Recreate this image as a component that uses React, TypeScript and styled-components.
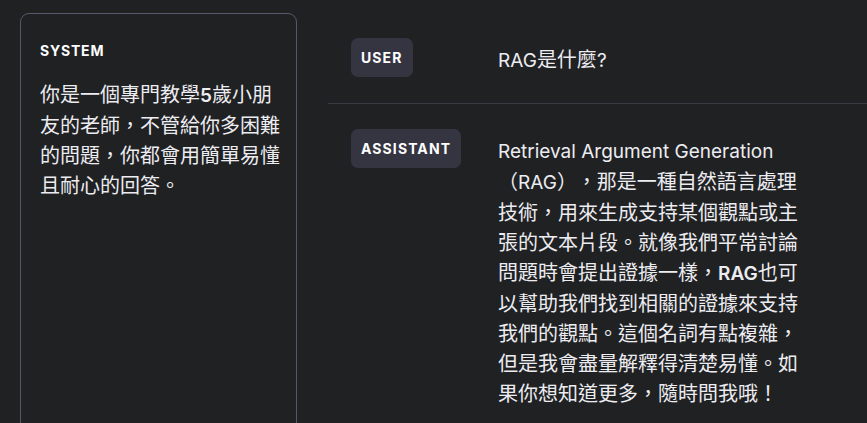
import React from "react";
import styled, { createGlobalStyle } from "styled-components";

const Global = createGlobalStyle`
  html, body {
    margin: 0;
    padding: 0;
    background: #202123;
    overflow: hidden;
  }
  body {
    font-family: "Inter", "Noto Sans CJK TC", sans-serif;
    color: #ececf1;
  }
`;

const Page = styled.div`
  display: flex;
  align-items: flex-start;
  width: 867px;
  height: 423px;
  box-sizing: border-box;
  padding: 13px 0 0 20px;
  overflow: hidden;
  background: #202123;
`;

const SystemPanel = styled.section`
  flex: 0 0 277px;
  box-sizing: border-box;
  min-height: 440px;
  border: 1px solid #565869;
  border-radius: 9px;
  padding: 27px 16px 0 19px;
`;

const Label = styled.div`
  font-family: "Inter", sans-serif;
  font-size: 14px;
  font-weight: 700;
  letter-spacing: 0.8px;
  line-height: 20px;
  color: #ffffff;
  margin-bottom: 19px;
`;

const Prose = styled.p<{ $max?: number }>`
  margin: 0;
  font-family: "Inter", "Noto Sans CJK TC", sans-serif;
  font-size: 20px;
  line-height: 30px;
  color: #ececf1;
  text-spacing-trim: space-all;
  font-feature-settings: "halt" 0, "chws" 0;
  max-width: ${(p) => (p.$max ? `${p.$max}px` : "none")};
`;

const Latin = styled.span<{ $bold?: boolean }>`
  font-family: "Inter", sans-serif;
  font-size: 19px;
  font-weight: ${(p) => (p.$bold ? 600 : 400)};
`;

const Thread = styled.main`
  flex: 1;
  margin-left: 31px;
  display: flex;
  flex-direction: column;
`;

const Row = styled.div<{ $divided?: boolean }>`
  display: flex;
  align-items: flex-start;
  padding: 25px 0 26px 23px;
  border-bottom: ${(p) => (p.$divided ? "1px solid #3a3b42" : "none")};
`;

const RoleCell = styled.div`
  flex: 0 0 147px;
`;

const Badge = styled.span`
  display: inline-block;
  background: #343541;
  border-radius: 7px;
  padding: 10px 10px;
  font-family: "Inter", sans-serif;
  font-size: 14px;
  font-weight: 700;
  letter-spacing: 1.1px;
  line-height: 19px;
  color: #ffffff;
`;

const MessageCell = styled.div`
  padding-top: 7px;
`;

export default function App() {
  return (
    <>
      <Global />
      <Page>
        <SystemPanel>
          <Label>SYSTEM</Label>
          <Prose>
            你是一個專門教學<Latin $bold>5</Latin>歲小朋友的老師，不管給你多困難的問題，你都會用簡單易懂且耐心的回答。
          </Prose>
        </SystemPanel>
        <Thread>
          <Row $divided>
            <RoleCell>
              <Badge>USER</Badge>
            </RoleCell>
            <MessageCell>
              <Prose>
                <Latin>RAG</Latin>是什麼<Latin>?</Latin>
              </Prose>
            </MessageCell>
          </Row>
          <Row>
            <RoleCell>
              <Badge>ASSISTANT</Badge>
            </RoleCell>
            <MessageCell>
              <Prose $max={310}>
                <Latin>Retrieval Argument Generation</Latin>（<Latin>RAG</Latin>），那是一種自然語言處理技術，用來生成支持某個觀點或主張的文本片段。就像我們平常討論問題時會提出證據一樣，<Latin $bold>RAG</Latin>也可以幫助我們找到相關的證據來支持我們的觀點。這個名詞有點複雜，但是我會盡量解釋得清楚易懂。如果你想知道更多，隨時問我哦！
              </Prose>
            </MessageCell>
          </Row>
        </Thread>
      </Page>
    </>
  );
}
